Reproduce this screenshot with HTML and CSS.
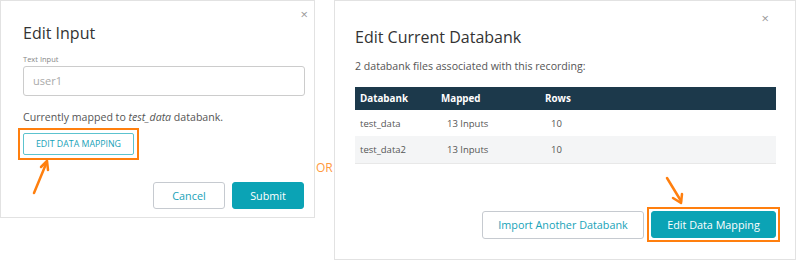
FILE: index.html
```html
<!DOCTYPE html>
<html>
<head>
<meta charset="utf-8">
<link rel="stylesheet" href="styles.css">
</head>
<body>
<div class="stage">
  <div class="modal modal-left">
    <span class="close">×</span>
    <h2 class="title">Edit Input</h2>
    <label class="field-label">Text Input</label>
    <div class="input">user1</div>
    <p class="mapped">Currently mapped to <em>test_data</em> databank.</p>
    <div class="hl hl-small"><button class="btn-outline-small">EDIT DATA MAPPING</button></div>
    <svg class="arrow arrow-left" width="20" height="36" viewBox="0 0 20 36"><path d="M3 34 L15 5" stroke="#ff7f0e" stroke-width="2.5" fill="none" stroke-linecap="round"/><path d="M10 8 L16 2 L17 11" stroke="#ff7f0e" stroke-width="2.5" fill="none" stroke-linecap="round" stroke-linejoin="round"/></svg>
    <div class="actions">
      <button class="btn btn-secondary">Cancel</button>
      <button class="btn btn-primary">Submit</button>
    </div>
  </div>
  <div class="or">OR</div>
  <div class="modal modal-right">
    <span class="close">×</span>
    <h2 class="title">Edit Current Databank</h2>
    <p class="sub">2 databank files associated with this recording:</p>
    <table class="tbl">
      <thead><tr><th class="c1">Databank</th><th class="c2">Mapped</th><th class="c3">Rows</th><th></th></tr></thead>
      <tbody>
        <tr><td class="c1">test_data</td><td class="c2">13 Inputs</td><td class="c3">10</td><td></td></tr>
        <tr class="alt"><td class="c1">test_data2</td><td class="c2">13 Inputs</td><td class="c3">10</td><td></td></tr>
      </tbody>
    </table>
    <svg class="arrow arrow-right" width="22" height="30" viewBox="0 0 22 30"><path d="M2 2 L16 25" stroke="#ff7f0e" stroke-width="2.5" fill="none" stroke-linecap="round"/><path d="M8 22 L16 27 L17 18" stroke="#ff7f0e" stroke-width="2.5" fill="none" stroke-linecap="round" stroke-linejoin="round"/></svg>
    <div class="actions actions-right">
      <button class="btn btn-secondary btn-import">Import Another Databank</button>
      <div class="hl hl-big"><button class="btn btn-primary btn-edit">Edit Data Mapping</button></div>
    </div>
  </div>
</div>
</body>
</html>
```
FILE: styles.css
```css
* { box-sizing: border-box; }
html, body { margin: 0; padding: 0; background: #fff; }
body { font-family: "Open Sans", "Noto Sans", sans-serif; color: #555; width: 797px; height: 260px; overflow: hidden; }
.stage { position: relative; display: flex; align-items: flex-start; }
.modal { position: relative; background: #fff; border: 1px solid #e2e2e2; }
.modal-left { width: 315px; height: 218px; padding: 0 0 0 22px; }
.modal-right { width: 462px; height: 260px; margin-left: 19px; padding: 0 0 0 20px; }
.close { position: absolute; font-size: 13px; color: #999; line-height: 1; }
.modal-left .close { right: 6px; top: 7px; }
.modal-right .close { right: 26px; top: 11px; }
.title { margin: 0; font-weight: 400; font-size: 16px; color: #333; line-height: 22px; }
.modal-left .title { padding-top: 21px; }
.modal-right .title { padding-top: 25px; }
.field-label { display: block; font-size: 7.5px; color: #888; margin-top: 10px; line-height: 11px; }
.input { width: 282px; height: 30px; border: 1px solid #ccc; border-radius: 3px; margin-top: 1px; padding: 6px 9px; font-size: 11px; color: #aaa; line-height: 16px; }
.mapped { margin: 14px 0 0; font-size: 10.6px; color: #555; line-height: 15px; }
.hl { display: inline-block; border: 2px solid #ff7f0e; }
.hl-small { margin: 3px 0 0 -5px; padding: 3px; }
.btn-outline-small { display: block; width: 111px; height: 22px; background: #fff; border: 1px solid #5cc3cf; border-radius: 2px; color: #17a2b8; font-family: inherit; font-size: 8.8px; padding: 0; }
.arrow { position: absolute; }
.arrow-left { left: 30px; top: 158px; }
.arrow-right { left: 330px; top: 175px; }
.actions { position: absolute; display: flex; gap: 7px; align-items: center; }
.modal-left .actions { right: 10px; top: 181px; }
.btn { font-family: inherit; font-size: 10.8px; border-radius: 3px; padding: 0; }
.btn-secondary { background: #fff; border: 1px solid #c6cad0; color: #17a2b8; }
.btn-primary { background: #0ba3b5; border: 1px solid #0ba3b5; color: #fff; }
.modal-left .btn { width: 72px; height: 27px; }
.or { position: absolute; left: 315px; top: 159px; font-size: 12px; color: #ff9a40; background: #fff; width: 19px; height: 18px; text-align: left; padding-left: 1px; line-height: 17px; }
.sub { margin: 11px 0 0; font-size: 10.6px; color: #555; line-height: 15px; }
.tbl { border-collapse: collapse; width: 421px; margin-top: 13px; font-size: 9.5px; table-layout: fixed; }
.tbl thead tr { background: #1c394b; color: #fff; }
.tbl th { text-align: left; font-weight: 700; height: 23px; padding: 0; font-size: 9.8px; }
.tbl td { height: 26px; padding: 0; color: #555; }
.tbl tbody tr.alt { height: 27px; border-bottom: 1px solid #e8e8e8; }
.tbl tr.alt { background: #f4f5f6; }
.tbl .c1 { width: 86px; padding-left: 5px; }
.tbl .c2 { width: 104px; }
.tbl .c3 { width: 60px; }
.tbl td.c2, .tbl td.c3 { padding-left: 6px; }
.modal-right .actions { right: 15px; top: 206px; gap: 3px; }
.btn-import { width: 162px; height: 28px; }
.hl-big { padding: 2px; }
.btn-edit { display: block; width: 125px; height: 27px; }
```
